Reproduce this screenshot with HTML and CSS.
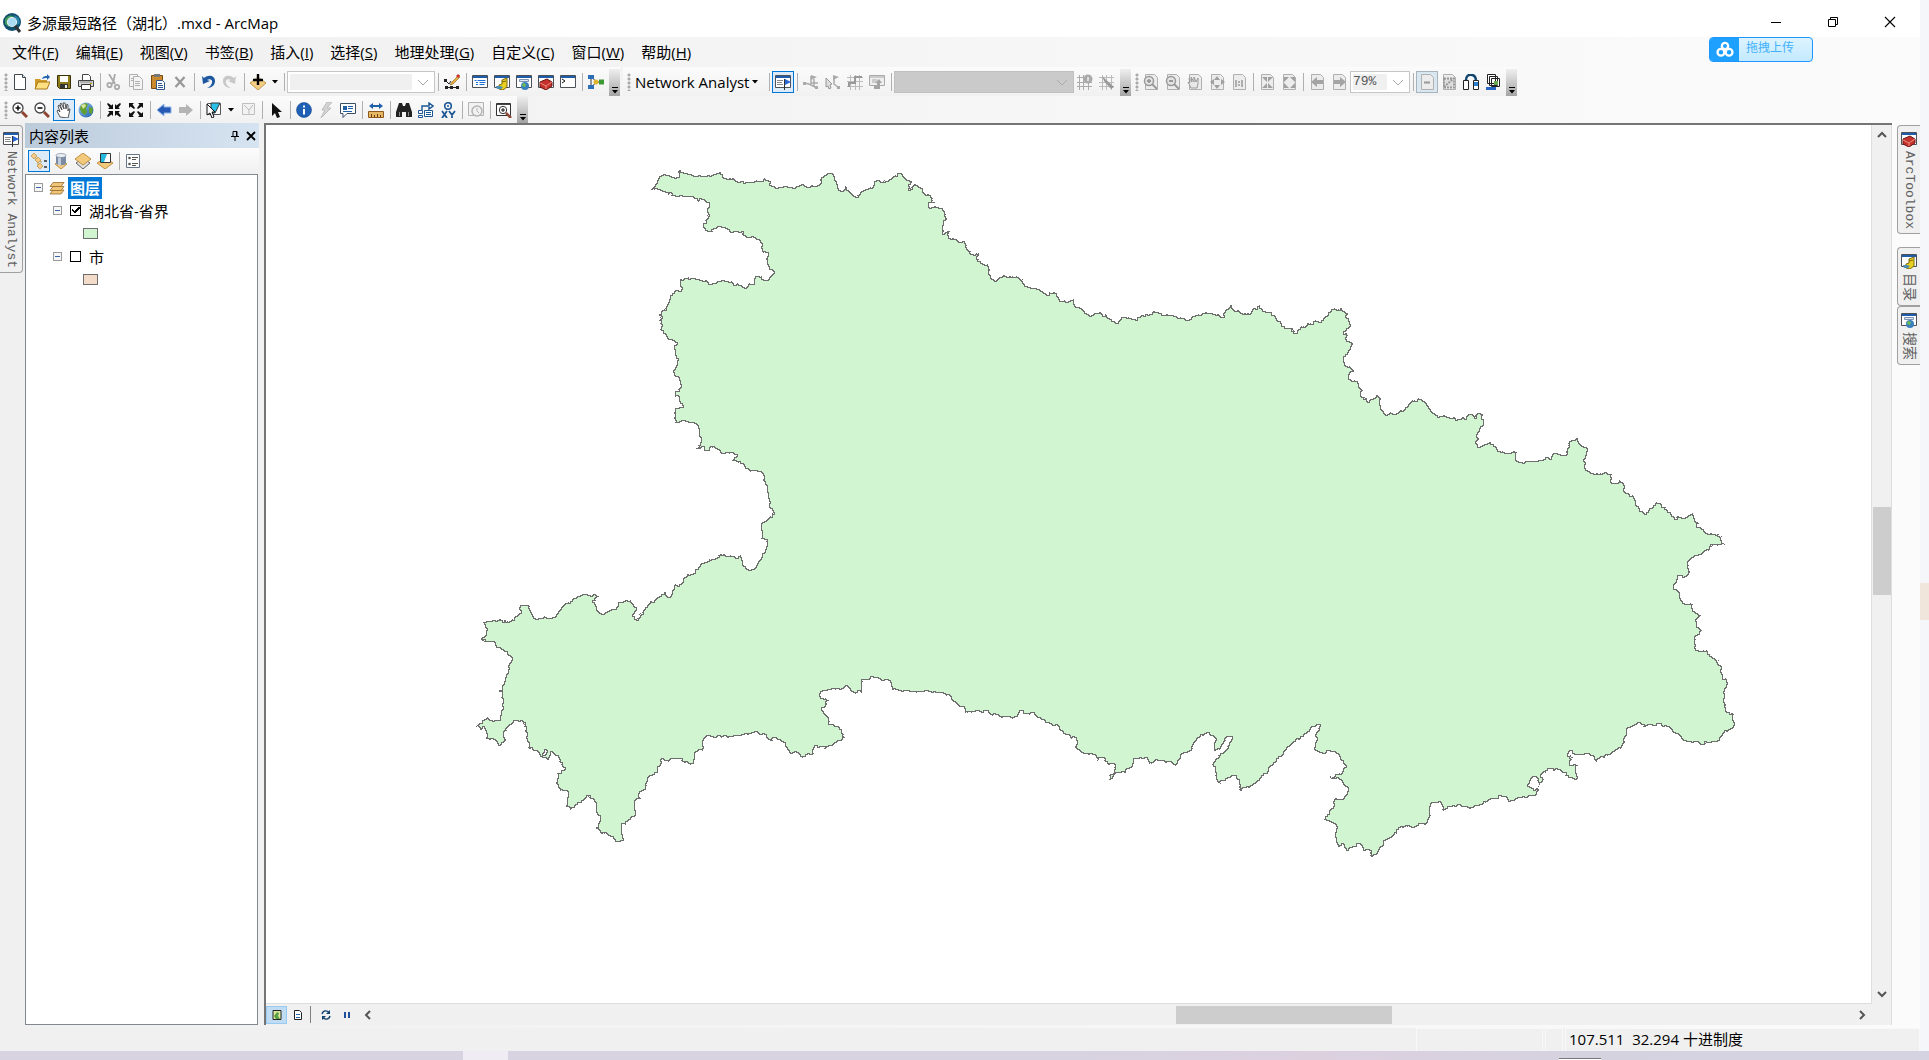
FILE: index.html
```html
<!DOCTYPE html>
<html lang="zh-CN">
<head>
<meta charset="utf-8">
<title>多源最短路径（湖北）.mxd - ArcMap</title>
<link rel="stylesheet" href="styles.css">
</head>
<body>
<svg class="sprite" aria-hidden="true">
<defs>
<linearGradient id="g-sky" x1="0" y1="0" x2="1" y2="1"><stop offset="0" stop-color="#9cc8f0"/><stop offset="1" stop-color="#1d5fae"/></linearGradient>
<filter id="coast" x="-2%" y="-2%" width="104%" height="104%" color-interpolation-filters="sRGB">
<feTurbulence type="fractalNoise" baseFrequency="0.16" numOctaves="2" seed="4" result="noise"/>
<feDisplacementMap in="SourceGraphic" in2="noise" scale="6" xChannelSelector="R" yChannelSelector="G" result="land"/>
<feMorphology in="land" operator="erode" radius="1" result="inner"/>
<feFlood flood-color="#6e6e6e"/>
<feComposite in2="land" operator="in" result="outline"/>
<feMerge><feMergeNode in="outline"/><feMergeNode in="inner"/></feMerge>
</filter>
</defs>
<symbol id="i-app" viewBox="0 0 20 20"><circle cx="10" cy="9" r="9" fill="#12506e"/><path d="M3 6c3-4 6-4 8-3l1 3-3 3-2 5-4-3z" fill="#3f9a5c"/><path d="M12 2l5 3 1 5-3 2z" fill="#2b84ab"/><circle cx="10" cy="9" r="4.500" fill="#a9dcf3" stroke="#e4edf1" stroke-width="1.200"/><path d="M13 13l5 6" stroke="#2b3438" stroke-width="3"/></symbol>
<symbol id="i-new" viewBox="0 0 16 16"><path d="M2.500.5h8l3 3v12h-11z" fill="#fff" stroke="#404850"/><path d="M10.500.5v3h3" fill="#dde6ee" stroke="#404850"/></symbol>
<symbol id="i-open" viewBox="0 0 16 16"><path d="M1 14V5h5l1 1h6v8z" fill="#d09a28"/><path d="M1 15l3-7h12l-3 7z" fill="#ffdf82" stroke="#a87818"/><path d="M8 5c1-3 3-3 5-3V0l3 3-3 3V4c-2 0-3 0-5 1z" fill="#2365ae"/></symbol>
<symbol id="i-save" viewBox="0 0 16 16"><path d="M1.500 1.500h13v13h-11l-2-2z" fill="#8d7b1c" stroke="#3a3308"/><path d="M4 2h8v6H4z" fill="#fff"/><path d="M4 10h8v4H4z" fill="#333"/><path d="M9 11h2v3H9z" fill="#eee"/></symbol>
<symbol id="i-print" viewBox="0 0 16 16"><path d="M4.500 6V.5h6l2 2V6" fill="#fff" stroke="#444"/><path d="M.5 6.500h15v6H.5z" fill="#d8d8d8" stroke="#444"/><path d="M3.500 10.500h9v5h-9z" fill="#fff" stroke="#333"/><path d="M2 8h12" stroke="#888"/><path d="M12 9h2v1h-2z" fill="#c9a300"/></symbol>
<symbol id="i-cut" viewBox="0 0 16 16"><g fill="none" stroke="#aaa" stroke-width="1.800"><path d="M3 0l6 10M9 0L7 9"/><circle cx="3.500" cy="11" r="2.200"/><circle cx="11" cy="13" r="2.200"/><path d="M5 10l4-2"/></g></symbol>
<symbol id="i-copy" viewBox="0 0 16 16"><g fill="#f4f4f4" stroke="#b0b0b0"><path d="M1.500.5h8v12h-8z"/><path d="M5.500 2.500h6l3 3v10h-9z"/><path d="M7 7.500h5M7 9.500h5M7 11.500h5M3 4.500h2M3 6.500h2"/></g></symbol>
<symbol id="i-paste" viewBox="0 0 16 16"><path d="M1.500 1.500h11v13h-11z" fill="#c98a2e" stroke="#7a4a10"/><path d="M4 0h6v3H4z" fill="#777"/><path d="M6.500 6.500h6l2 2v7h-8z" fill="#fff" stroke="#31588c"/><path d="M8 9.500h4M8 11.500h5M8 13.500h5" stroke="#31588c"/></symbol>
<symbol id="i-del" viewBox="0 0 16 16"><path d="M3.500 3l9 10m0-10l-9 10" stroke="#999" stroke-width="2.400"/></symbol>
<symbol id="i-undo" viewBox="0 0 16 16"><path d="M2 2l1 8 7-3-3-1c3-2 6 0 5 3-1 2-2 4-5 5 5 0 8-3 8-7 0-5-6-7-11-3z" fill="#1d57a0"/></symbol>
<symbol id="i-redo" viewBox="0 0 16 16"><path d="M14 2l-1 8-7-3 3-1C6 4 3 6 4 9c1 2 2 4 5 5-5 0-8-3-8-7 0-5 6-7 11-3z" fill="#c8c8c8"/></symbol>
<symbol id="i-add" viewBox="0 0 16 16"><path d="M0 9l8-6 8 6-8 7z" fill="#f2cd84" stroke="#c39a4a"/><path d="M8 0v11M3 6h10" stroke="#000" stroke-width="2.400"/></symbol>
<symbol id="i-edit" viewBox="0 0 16 16"><path d="M15 1L8 8l-2 3 3-1 7-7z" fill="#e7b33c" stroke="#8a5a10" stroke-width=".6"/><path d="M2 7l3 3 2-3M2 13.500h11" stroke="#222" fill="none"/><path d="M1 12h3v3H1zM6 12h3v3H6zM12 12h3v3h-3zM0 5h3v3H0z" fill="#222"/><path d="M14 0l2 2-2 2-2-2z" fill="#c33"/></symbol>
<symbol id="i-win" viewBox="0 0 16 16"><path d="M.5 1.500h15v12H.5z" fill="#fff" stroke="#4b5157"/><path d="M1 2h14v2H1z" fill="#1f5dab"/></symbol>
<symbol id="i-toc" viewBox="0 0 16 16"><use href="#i-win"/><path d="M2.500 6.500h2M5.500 6.500h8M4 8.500h2M7.500 8.500h6M4 10.500h2M7.500 10.500h5" stroke="#1a6fd0"/></symbol>
<symbol id="i-cat" viewBox="0 0 16 16"><use href="#i-win"/><path d="M8 6l5-2v9l-4 3-4-1v-4l3-1z" fill="#e8cf20" stroke="#7d6a08"/><path d="M2 12h4l3 1-2 2H3z" fill="#4c8fb5"/><path d="M8 8l4-1" stroke="#7d6a08"/></symbol>
<symbol id="i-search" viewBox="0 0 16 16"><use href="#i-win"/><path d="M3.500 5.500h9v2h-9z" fill="#dfe7f4" stroke="#7c93b4"/><circle cx="9" cy="12" r="4" fill="#3a80c0"/><path d="M7 9l3 1-1 3-3-1z" fill="#6cc04a"/></symbol>
<symbol id="i-box" viewBox="0 0 16 16"><use href="#i-win"/><path d="M2 8l7-3 5 3v4l-6 4-6-3z" fill="#c5322b" stroke="#6c1512"/><path d="M2 9l6 3 6-4M8 12v3" stroke="#f08a80" fill="none"/></symbol>
<symbol id="i-py" viewBox="0 0 16 16"><use href="#i-win"/><path d="M2 5l3 2-3 2" fill="none" stroke="#111"/></symbol>
<symbol id="i-model" viewBox="0 0 16 16"><path d="M3 3v10M4 3l4 5-4 5M8 8h6" stroke="#333" fill="none"/><path d="M0 1h6v4H0zM0 11h6v4H0z" fill="#2b6fb8"/><circle cx="8" cy="8" r="2.500" fill="#e0b52c"/><path d="M11 5.500h5v5h-5z" fill="#3d9a32"/></symbol>
<symbol id="i-flagwin" viewBox="0 0 16 16"><use href="#i-win"/><path d="M2 6.500h6M2 8.500h5M2 10.500h6" stroke="#888"/><path d="M9.500 5v11" stroke="#333"/><path d="M10 5l6 3-6 3z" fill="#2767d6"/></symbol>
<symbol id="i-na1" viewBox="0 0 16 16"><path d="M1 9l5 1 8 4M8 2v8M11 5v8M8 9h7" stroke="#aaa" stroke-width="1.500" fill="none"/><path d="M0 8h3v3H0zM12 12h3v3h-3zM8 1l6 2-6 3z" fill="#aaa"/></symbol>
<symbol id="i-na2" viewBox="0 0 16 16"><path d="M9 3v7l5 4" stroke="#aaa" stroke-width="1.500" fill="none"/><path d="M1 4l6 6-2 1 1 3-2 1-1-3-2 1z" fill="#ddd" stroke="#999"/><path d="M8 1l6 2-6 3zM12 12h3v3h-3z" fill="#aaa"/></symbol>
<symbol id="i-na3" viewBox="0 0 16 16"><path d="M0 3.500h16M0 7.500h16M0 12.500h16M3.500 1v15M8.500 1v15M12.500 1v15" stroke="#bbb" fill="none"/><path d="M2 13V9h6V3h7" fill="none" stroke="#999" stroke-width="2"/></symbol>
<symbol id="i-na4" viewBox="0 0 16 16"><path d="M.5 1.500h15v10H.5z" fill="#eee" stroke="#aaa"/><path d="M1 3h14M3 6h5M3 8h4" stroke="#aaa"/><path d="M5 15h6V9h2l-3-4-4 4h2v3H5z" fill="#a4a4a4"/></symbol>
<symbol id="i-na5" viewBox="0 0 16 16"><path d="M0 3.500h15M0 8.500h15M0 12.500h15M2.500 1v15M6.500 1v15M11.500 1v15" stroke="#aaa" fill="none"/><circle cx="11" cy="5" r="4.500" fill="#aaa"/><path d="M11 3v4" stroke="#eee" stroke-width="1.500"/></symbol>
<symbol id="i-na6" viewBox="0 0 16 16"><path d="M0 3.500h15M0 8.500h15M0 12.500h15M3.500 1v15M7.500 1v15M12.500 1v15" stroke="#bbb" fill="none"/><path d="M3 2l12 11-3 2-7-8z" fill="#999"/></symbol>
<symbol id="i-page" viewBox="0 0 16 16"><path d="M2.500.5h9l3 3v12h-12z" fill="#ececec" stroke="#b0b0b0"/></symbol>
<symbol id="i-pzin" viewBox="0 0 16 16"><use href="#i-page"/><circle cx="6" cy="7" r="4.500" fill="#e4e4e4" stroke="#999" stroke-width="1.500"/><path d="M9 10l5 5M4 7h4M6 5v4" stroke="#999" stroke-width="1.800"/></symbol>
<symbol id="i-pzout" viewBox="0 0 16 16"><use href="#i-page"/><circle cx="6" cy="7" r="4.500" fill="#e4e4e4" stroke="#999" stroke-width="1.500"/><path d="M9 10l5 5M4 7h4" stroke="#999" stroke-width="1.800"/></symbol>
<symbol id="i-hand" viewBox="0 0 16 16"><path d="M4 15L1 9l1-1 2 2-2-6 1-1 3 5-2-6 1-1 3 6-1-6h2l1 6 1-5 1 1v6l1-2h1l-1 5-1 4z" fill="#fff" stroke="#444" stroke-width=".9"/></symbol>
<symbol id="i-phand" viewBox="0 0 16 16"><use href="#i-page"/><path d="M4 14L1 8l2 1-1-5 3 4-1-5 3 5V3l2 5 2-4v6l-1 4z" fill="#e8e8e8" stroke="#999"/></symbol>
<symbol id="i-pfull" viewBox="0 0 16 16"><use href="#i-page"/><path d="M8 2l3 4H5zM8 15l3-4H5zM1 8l4-3v6zM16 8l-4-3v6z" fill="#a0a0a0"/></symbol>
<symbol id="i-p11" viewBox="0 0 16 16"><use href="#i-page"/><path d="M5 6v7M11 6v7M8 7v2M8 10v2" stroke="#999" stroke-width="1.500"/></symbol>
<symbol id="i-pin4" viewBox="0 0 16 16"><use href="#i-page"/><path d="M3 3h5v5zM14 3H9v5zM3 14h5V9zM14 14H9V9z" fill="#a0a0a0"/></symbol>
<symbol id="i-pout4" viewBox="0 0 16 16"><use href="#i-page"/><path d="M3 3v5l5-5zM14 3v5L9 3zM3 14V9l5 5zM14 14V9l-5 5z" fill="#a0a0a0"/></symbol>
<symbol id="i-pback" viewBox="0 0 16 16"><use href="#i-page"/><path d="M2 8l6-5v3h6v4H8v3z" fill="#a4a4a4"/></symbol>
<symbol id="i-pfwd" viewBox="0 0 16 16"><use href="#i-page"/><path d="M15 8L9 3v3H3v4h6v3z" fill="#a4a4a4"/></symbol>
<symbol id="i-draft" viewBox="0 0 16 16"><use href="#i-page"/><path d="M5 8.500h6" stroke="#999" stroke-width="2"/></symbol>
<symbol id="i-focus" viewBox="0 0 16 16"><use href="#i-page"/><path d="M3 4.500h10v9H3zM3 13l10-9" fill="#ddd" stroke="#999" stroke-width="2" stroke-dasharray="2 1"/></symbol>
<symbol id="i-change" viewBox="0 0 16 16"><path d="M.5 6.500h5v9h-5zM10.500 6.500h5v9h-5z" fill="#fff" stroke="#222"/><path d="M3 6c0-7 9-7 10 0" fill="none" stroke="#12466f" stroke-width="2.500"/><path d="M11 8h4v4h-4z" fill="#2b80d0"/></symbol>
<symbol id="i-ddp" viewBox="0 0 16 16"><path d="M2.500.5h8v9h-8zM4.500 2.500h8v9h-8zM6.500 4.500h8v8h-8z" fill="#fff" stroke="#222"/><path d="M9 7h4v4H9z" fill="#69a84e"/><path d="M1 13h10v3H1z" fill="#2767c6"/></symbol>
<symbol id="i-zin" viewBox="0 0 16 16"><circle cx="6" cy="6" r="5" fill="#fff" stroke="#444" stroke-width="1.300"/><path d="M3.500 6h5M6 3.500v5" stroke="#111" stroke-width="1.600"/><path d="M10 10l5 5" stroke="#8e4632" stroke-width="3"/></symbol>
<symbol id="i-zout" viewBox="0 0 16 16"><circle cx="6" cy="6" r="5" fill="#fff" stroke="#444" stroke-width="1.300"/><path d="M3.500 6h5" stroke="#111" stroke-width="1.600"/><path d="M10 10l5 5" stroke="#8e4632" stroke-width="3"/></symbol>
<symbol id="i-globe" viewBox="0 0 16 16"><circle cx="8" cy="8" r="7.500" fill="url(#g-sky)"/><path d="M3 3l5-2 2 2-2 3 1 4-2 3-3-2-2-4zM11 5l4 1-1 6-3-1z" fill="#629f2e"/><path d="M3 3l4-1 1 2-3 3z" fill="#d9e59c"/></symbol>
<symbol id="i-in4" viewBox="0 0 16 16"><path d="M7 7V2L5.500 3.500 2 1 1 2l2.500 3.500L2 7zM9 7V2l1.500 1.500L14 1l1 1-2.500 3.500L14 7zM7 9v5l-1.500-1.500L2 15l-1-1 2.500-3.500L2 9zM9 9v5l1.500-1.500L14 15l1-1-2.500-3.500L14 9z" fill="#111"/></symbol>
<symbol id="i-out4" viewBox="0 0 16 16"><path d="M1 1h5L4.500 2.500 7 6 6 7 2.500 4.500 1 6zM15 1h-5l1.500 1.500L9 6l1 1 3.500-2.500L15 6zM1 15h5l-1.500-1.500L7 10 6 9l-3.500 2.500L1 10zM15 15h-5l1.500-1.500L9 10l1-1 3.500 2.500L15 10z" fill="#111"/></symbol>
<symbol id="i-back" viewBox="0 0 16 16"><path d="M1 8l7-6v3h7v6H8v3z" fill="#2559b4" stroke="#8fb4e6"/></symbol>
<symbol id="i-fwd" viewBox="0 0 16 16"><path d="M15 8L8 2v3H1v6h7v3z" fill="#b4b4b4"/></symbol>
<symbol id="i-sel" viewBox="0 0 16 16"><path d="M1.500 1.500h13v11h-13z" fill="#fff" stroke="#555"/><path d="M5 1h9l-5 10H5z" fill="#28bfe8" stroke="#333"/><path d="M1 2l8 8H6l2 5-2 1-2-5-3 2z" fill="#fff" stroke="#111"/></symbol>
<symbol id="i-clear" viewBox="0 0 16 16"><path d="M2.500 1.500h12v11h-12z" fill="#f2f2f2" stroke="#c0c0c0"/><path d="M4 3l5 5 4-5M9 8v4" fill="none" stroke="#bbb"/></symbol>
<symbol id="i-arrow" viewBox="0 0 16 16"><path d="M4 1v13l3-3 2 5 3-1-2-5h4z" fill="#111"/></symbol>
<symbol id="i-info" viewBox="0 0 16 16"><circle cx="8" cy="8" r="7.500" fill="#1f5fb4" stroke="#184a8d" stroke-width=".6"/><path d="M8 7v5.500M8 3.500v2" stroke="#fff" stroke-width="2"/></symbol>
<symbol id="i-bolt" viewBox="0 0 16 16"><path d="M9 0L4 8h3l-4 8 10-10H9l5-6z" fill="#d4d4d4" stroke="#bbb"/></symbol>
<symbol id="i-popup" viewBox="0 0 16 16"><path d="M.5 1.500h15v10H7l-4 4v-4H.5z" fill="#fff" stroke="#3d4f66"/><path d="M3 4h4v4H3zM8 4h5v1H8zM8 6h5v1H8zM3 9h9v1H3z" fill="#1e5fa8"/></symbol>
<symbol id="i-measure" viewBox="0 0 16 16"><path d="M1 4l4-3v2h6V1l4 3-4 3V5H5v2z" fill="#1e5fa8"/><path d="M.5 9.500h15v6H.5z" fill="#e6b863" stroke="#8c5a20"/><path d="M3.500 12v3M6.500 13v2M9.500 12v3M12.500 13v2" stroke="#6b3c10"/></symbol>
<symbol id="i-find" viewBox="0 0 16 16"><path d="M3 1h3l1 3h2l1-3h3l3 9v5h-6v-5H6v5H0v-5z" fill="#222"/><path d="M3 10h1v4H3zM12 10h1v4h-1z" fill="#888"/></symbol>
<symbol id="i-route" viewBox="0 0 16 16"><path d="M4 8V4h7V1l4 3-4 3V5" fill="none" stroke="#1d5795" stroke-width="1.400"/><path d="M.5 8.500h4v3h-4zM6.500 8.500h8v6h-8zM.5 13.500h4v2h-4z" fill="#fff" stroke="#1d5795"/><path d="M8 10.500h5M8 12.500h5" stroke="#1d5795"/></symbol>
<symbol id="i-xy" viewBox="0 0 16 16"><circle cx="8" cy="4" r="3.300" fill="none" stroke="#1d5795" stroke-width="1.600"/><circle cx="8" cy="4" r="1" fill="#1d5795"/><path d="M2 9l5 7M7 9l-5 7M9 9l3 4 3-4M12 12v4" fill="none" stroke="#1d5795" stroke-width="1.800"/></symbol>
<symbol id="i-time" viewBox="0 0 16 16"><path d="M.5.500h15v13H.5z" fill="#f2f2f2" stroke="#b4b4b4"/><circle cx="9" cy="9" r="5" fill="#f2f2f2" stroke="#b4b4b4" stroke-width="1.500"/><path d="M9 6v3l2 2" fill="none" stroke="#b4b4b4"/></symbol>
<symbol id="i-viewer" viewBox="0 0 16 16"><path d="M.5 1.500h14v12H.5z" fill="#fff" stroke="#333"/><path d="M1 2.500h13" stroke="#444"/><circle cx="7" cy="8" r="3.700" fill="#fff" stroke="#333"/><path d="M5 8h4M7 6v4" stroke="#111"/><path d="M10 11l5 5" stroke="#8e4632" stroke-width="2.500"/></symbol>
<symbol id="i-list1" viewBox="0 0 16 16"><path d="M4 4l3 4 4 1M7 8v6h4" fill="none" stroke="#bf9440"/><path d="M3 0l3 3-3 3-3-3zM7 4l3 3-3 3-3-3zM9 10l3 3-3 3-3-3z" fill="#f3cb84" stroke="#bd9144" stroke-width=".7"/><path d="M13 8h3M13 14h3" stroke="#333" stroke-width="1.500"/></symbol>
<symbol id="i-list2" viewBox="0 0 16 16"><path d="M2 11l6-3 6 3-6 5z" fill="#f3cb84" stroke="#bd9144"/><path d="M3 2v8c0 3 10 3 10 0V2z" fill="#7a8ba3"/><path d="M5 3h3v9H5z" fill="#c0ccdc"/><ellipse cx="8" cy="2.500" rx="5" ry="2" fill="#edf1f6" stroke="#65768e" stroke-width=".6"/></symbol>
<symbol id="i-list3" viewBox="0 0 16 16"><path d="M1 10l7-5 7 5-7 6z" fill="#ddd" stroke="#666"/><path d="M0 6l8-6 8 6-8 6z" fill="#f3c97c" stroke="#bd9144"/></symbol>
<symbol id="i-list4" viewBox="0 0 16 16"><path d="M0 10l8-5 8 5-8 6z" fill="#f3c97c" stroke="#bd9144"/><path d="M3.500.5h10v9h-10z" fill="#fff" stroke="#333"/><path d="M4 1h6l-3 8H4z" fill="#26b8df"/></symbol>
<symbol id="i-list5" viewBox="0 0 16 16"><path d="M1.500 1.500h13v13h-13z" fill="#fff" stroke="#65758a"/><circle cx="4.500" cy="5" r="1.300" fill="#555"/><circle cx="4.500" cy="11" r="1.300" fill="#555"/><path d="M7 4.500h6M7 6.500h4M7 10.500h6M7 12.500h4" stroke="#555"/></symbol>
<symbol id="i-layers" viewBox="0 0 16 14"><g fill="#f0c57a" stroke="#96692a" stroke-width=".8"><path d="M4 9h11l-3 4H1z"/><path d="M4 5.500h11l-3 4H1z"/><path d="M4 1.500h11l-3 4H1z"/></g></symbol>
<symbol id="i-map" viewBox="0 0 10 10"><path d="M1 .5h8v9H1z" fill="#dbe9a0" stroke="#222"/><path d="M2 6l3-4 2 1-1 3 2 3H4z" fill="#5aa040"/></symbol>
<symbol id="i-layout" viewBox="0 0 10 10"><path d="M1.500.5h5l2 2v7h-7z" fill="#fff" stroke="#222"/><path d="M3 4h4v1H3zM3 7h4v1H3z" fill="#2767a8"/></symbol>
<symbol id="i-refresh" viewBox="0 0 10 10"><path d="M1 4c1-4 6-4 7-1M9 6c-1 4-6 4-7 1" fill="none" stroke="#12426f" stroke-width="1.400"/><path d="M9 0v4H5zM1 10V6h4z" fill="#12426f"/></symbol>
<symbol id="i-pause" viewBox="0 0 10 10"><path d="M2 2h2v6H2zM6 2h2v6H6z" fill="#1d4f9a"/></symbol>
<symbol id="i-left" viewBox="0 0 10 10"><path d="M7 1L3 5l4 4" fill="none" stroke="#555" stroke-width="2"/></symbol>
<symbol id="i-right" viewBox="0 0 10 10"><path d="M3 1l4 4-4 4" fill="none" stroke="#555" stroke-width="2"/></symbol>
<symbol id="i-up" viewBox="0 0 10 10"><path d="M1 7l4-4 4 4" fill="none" stroke="#555" stroke-width="2"/></symbol>
<symbol id="i-down" viewBox="0 0 10 10"><path d="M1 3l4 4 4-4" fill="none" stroke="#555" stroke-width="2"/></symbol>
<symbol id="i-chev" viewBox="0 0 10 10"><path d="M0 3l5 5 5-5" fill="none" stroke="#a9a9a9"/></symbol>
<symbol id="i-drop" viewBox="0 0 6 4"><path d="M0 0h6L3 3.500z" fill="#000"/></symbol>
<symbol id="i-over" viewBox="0 0 8 8"><path d="M1 1.500h6" stroke="#000"/><path d="M1 4h6L4 7.500z" fill="#000"/></symbol>
<symbol id="i-min" viewBox="0 0 12 12"><path d="M1 6.500h10" stroke="#000"/></symbol>
<symbol id="i-restore" viewBox="0 0 12 12"><path d="M1.500 3.500h7v7h-7zM3.500 3V1.500h7v7H9" fill="none" stroke="#000"/></symbol>
<symbol id="i-close" viewBox="0 0 12 12"><path d="M1 1l10 10M11 1L1 11" stroke="#000" stroke-width="1.100"/></symbol>
<symbol id="i-x" viewBox="0 0 10 10"><path d="M1 1l8 8M9 1L1 9" stroke="#000" stroke-width="1.800"/></symbol>
<symbol id="i-pin" viewBox="0 0 10 10"><path d="M3 .5h4v5H3zM1 5.500h8M5 6v4M6.500 1v5" fill="none" stroke="#000"/></symbol>
<symbol id="i-cloud" viewBox="0 0 20 20"><g fill="none" stroke="#fff" stroke-width="2.600"><circle cx="10" cy="5.500" r="3.500"/><circle cx="5.500" cy="12.500" r="3.800"/><circle cx="14.500" cy="12.500" r="3.800"/></g></symbol>
</svg>

<div class="screen">
<div class="window">
<header class="titlebar">
<svg class="app-icon"><use href="#i-app"/></svg>
<h1 class="title">多源最短路径（湖北）.mxd - ArcMap</h1>
<div class="window-buttons">
<button aria-label="最小化"><svg><use href="#i-min"/></svg></button>
<button aria-label="还原"><svg><use href="#i-restore"/></svg></button>
<button aria-label="关闭"><svg><use href="#i-close"/></svg></button>
</div>
</header>

<nav class="menubar">
<button>文件(<u>F</u>)</button><button>编辑(<u>E</u>)</button><button>视图(<u>V</u>)</button><button>书签(<u>B</u>)</button><button>插入(<u>I</u>)</button><button>选择(<u>S</u>)</button><button>地理处理(<u>G</u>)</button><button>自定义(<u>C</u>)</button><button>窗口(<u>W</u>)</button><button>帮助(<u>H</u>)</button>
<button class="upload"><span class="upload-logo"><svg><use href="#i-cloud"/></svg></span><span class="upload-text">拖拽上传</span></button>
</nav>

<div class="toolrow toolrow-first">
<div class="toolbar" role="toolbar" aria-label="标准工具">
<i class="grip"></i>
<button class="tool" aria-label="新建"><svg><use href="#i-new"/></svg></button>
<button class="tool" aria-label="打开"><svg><use href="#i-open"/></svg></button>
<button class="tool" aria-label="保存"><svg><use href="#i-save"/></svg></button>
<button class="tool" aria-label="打印"><svg><use href="#i-print"/></svg></button>
<i class="sep"></i>
<button class="tool" aria-label="剪切"><svg><use href="#i-cut"/></svg></button>
<button class="tool" aria-label="复制"><svg><use href="#i-copy"/></svg></button>
<button class="tool" aria-label="粘贴"><svg><use href="#i-paste"/></svg></button>
<button class="tool" aria-label="删除"><svg><use href="#i-del"/></svg></button>
<i class="sep"></i>
<button class="tool" aria-label="撤消"><svg><use href="#i-undo"/></svg></button>
<button class="tool" aria-label="恢复"><svg><use href="#i-redo"/></svg></button>
<i class="sep"></i>
<button class="tool" aria-label="添加数据"><svg><use href="#i-add"/></svg></button>
<button class="drop" aria-label="添加数据选项"><svg><use href="#i-drop"/></svg></button>
<i class="sep"></i>
<label class="combo combo-scale"><select aria-label="比例尺" disabled><option></option></select><svg><use href="#i-chev"/></svg></label>
<i class="sep"></i>
<button class="tool" aria-label="编辑器工具条"><svg><use href="#i-edit"/></svg></button>
<i class="sep"></i>
<button class="tool" aria-label="内容列表窗口"><svg><use href="#i-toc"/></svg></button>
<button class="tool" aria-label="目录窗口"><svg><use href="#i-cat"/></svg></button>
<button class="tool" aria-label="搜索窗口"><svg><use href="#i-search"/></svg></button>
<button class="tool" aria-label="ArcToolbox 窗口"><svg><use href="#i-box"/></svg></button>
<button class="tool" aria-label="Python 窗口"><svg><use href="#i-py"/></svg></button>
<i class="sep"></i>
<button class="tool" aria-label="模型构建器"><svg><use href="#i-model"/></svg></button>
<button class="overflow" aria-label="工具条选项"><svg><use href="#i-over"/></svg></button>
</div>
<div class="toolbar" role="toolbar" aria-label="Network Analyst">
<i class="grip"></i>
<button class="na-menu">Network Analyst<svg><use href="#i-drop"/></svg></button>
<i class="sep"></i>
<button class="tool is-on" aria-label="Network Analyst 窗口"><svg><use href="#i-flagwin"/></svg></button>
<i class="sep"></i>
<button class="tool" aria-label="创建网络位置"><svg><use href="#i-na1"/></svg></button>
<button class="tool" aria-label="选择网络位置"><svg><use href="#i-na2"/></svg></button>
<button class="tool" aria-label="求解"><svg><use href="#i-na3"/></svg></button>
<button class="tool" aria-label="方向"><svg><use href="#i-na4"/></svg></button>
<i class="sep"></i>
<label class="combo combo-network"><select aria-label="网络数据集" disabled><option></option></select><svg><use href="#i-chev"/></svg></label>
<button class="tool" aria-label="网络识别"><svg><use href="#i-na5"/></svg></button>
<button class="tool" aria-label="构建网络"><svg><use href="#i-na6"/></svg></button>
<button class="overflow" aria-label="工具条选项"><svg><use href="#i-over"/></svg></button>
</div>
<div class="toolbar" role="toolbar" aria-label="布局">
<i class="grip"></i>
<button class="tool" aria-label="布局放大"><svg><use href="#i-pzin"/></svg></button>
<button class="tool" aria-label="布局缩小"><svg><use href="#i-pzout"/></svg></button>
<button class="tool" aria-label="布局平移"><svg><use href="#i-phand"/></svg></button>
<button class="tool" aria-label="缩放至整页"><svg><use href="#i-pfull"/></svg></button>
<button class="tool" aria-label="缩放至 100%"><svg><use href="#i-p11"/></svg></button>
<i class="sep"></i>
<button class="tool" aria-label="固定比例放大"><svg><use href="#i-pin4"/></svg></button>
<button class="tool" aria-label="固定比例缩小"><svg><use href="#i-pout4"/></svg></button>
<i class="sep"></i>
<button class="tool" aria-label="返回到范围"><svg><use href="#i-pback"/></svg></button>
<button class="tool" aria-label="前进至范围"><svg><use href="#i-pfwd"/></svg></button>
<label class="combo combo-zoom"><select aria-label="缩放" disabled><option>79%</option></select><svg><use href="#i-chev"/></svg></label>
<i class="sep"></i>
<button class="tool is-checked" aria-label="切换描绘模式"><svg><use href="#i-draft"/></svg></button>
<button class="tool" aria-label="聚焦数据框"><svg><use href="#i-focus"/></svg></button>
<button class="tool" aria-label="更改布局"><svg><use href="#i-change"/></svg></button>
<button class="tool" aria-label="数据驱动页面"><svg><use href="#i-ddp"/></svg></button>
<button class="overflow" aria-label="工具条选项"><svg><use href="#i-over"/></svg></button>
</div>
</div>

<div class="toolrow toolrow-second">
<div class="toolbar" role="toolbar" aria-label="工具">
<i class="grip"></i>
<button class="tool" aria-label="放大"><svg><use href="#i-zin"/></svg></button>
<button class="tool" aria-label="缩小"><svg><use href="#i-zout"/></svg></button>
<button class="tool is-on" aria-label="平移"><svg><use href="#i-hand"/></svg></button>
<button class="tool" aria-label="全图"><svg><use href="#i-globe"/></svg></button>
<i class="sep"></i>
<button class="tool" aria-label="固定比例放大"><svg><use href="#i-in4"/></svg></button>
<button class="tool" aria-label="固定比例缩小"><svg><use href="#i-out4"/></svg></button>
<i class="sep"></i>
<button class="tool" aria-label="上一视图"><svg><use href="#i-back"/></svg></button>
<button class="tool" aria-label="下一视图"><svg><use href="#i-fwd"/></svg></button>
<i class="sep"></i>
<button class="tool" aria-label="选择要素"><svg><use href="#i-sel"/></svg></button>
<button class="drop" aria-label="选择方式"><svg><use href="#i-drop"/></svg></button>
<button class="tool" aria-label="清除所选要素"><svg><use href="#i-clear"/></svg></button>
<i class="sep"></i>
<button class="tool" aria-label="选择元素"><svg><use href="#i-arrow"/></svg></button>
<i class="sep"></i>
<button class="tool" aria-label="识别"><svg><use href="#i-info"/></svg></button>
<button class="tool" aria-label="超链接"><svg><use href="#i-bolt"/></svg></button>
<button class="tool" aria-label="HTML 弹出窗口"><svg><use href="#i-popup"/></svg></button>
<i class="sep"></i>
<button class="tool" aria-label="测量"><svg><use href="#i-measure"/></svg></button>
<i class="sep"></i>
<button class="tool" aria-label="查找"><svg><use href="#i-find"/></svg></button>
<button class="tool" aria-label="查找路径"><svg><use href="#i-route"/></svg></button>
<button class="tool" aria-label="转到 XY"><svg><use href="#i-xy"/></svg></button>
<i class="sep"></i>
<button class="tool" aria-label="时间滑块"><svg><use href="#i-time"/></svg></button>
<i class="sep"></i>
<button class="tool" aria-label="创建查看器窗口"><svg><use href="#i-viewer"/></svg></button>
<button class="overflow" aria-label="工具条选项"><svg><use href="#i-over"/></svg></button>
</div>
</div>

<main class="workspace">
<div class="dock dock-left">
<button class="side-tab tab-left"><svg><use href="#i-flagwin"/></svg><span>Network Analyst</span></button>
</div>

<aside class="toc">
<div class="toc-head"><h2>内容列表</h2><button aria-label="自动隐藏"><svg><use href="#i-pin"/></svg></button><button aria-label="关闭面板"><svg><use href="#i-x"/></svg></button></div>
<div class="toc-tools">
<button class="tool is-on" aria-label="按绘制顺序列出"><svg><use href="#i-list1"/></svg></button>
<button class="tool" aria-label="按源列出"><svg><use href="#i-list2"/></svg></button>
<button class="tool" aria-label="按可见性列出"><svg><use href="#i-list3"/></svg></button>
<button class="tool" aria-label="按选择列出"><svg><use href="#i-list4"/></svg></button>
<i class="sep"></i>
<button class="tool" aria-label="选项"><svg><use href="#i-list5"/></svg></button>
</div>
<ul class="tree">
<li class="row"><button class="twisty" aria-label="折叠图层"></button><svg class="layers"><use href="#i-layers"/></svg><span class="selected">图层</span></li>
<li class="row level-2"><button class="twisty" aria-label="折叠湖北省"></button><input type="checkbox" id="lyr-prov" checked><label for="lyr-prov">湖北省-省界</label></li>
<li class="row level-3"><span class="swatch swatch-green"></span></li>
<li class="row level-2"><button class="twisty" aria-label="折叠市"></button><input type="checkbox" id="lyr-city"><label for="lyr-city">市</label></li>
<li class="row level-3"><span class="swatch swatch-peach"></span></li>
</ul>
</aside>

<section class="map-frame">
<div class="map-view">
<svg class="map" viewBox="267 125 1605 878" role="img" aria-label="湖北省省界">
<path class="province" filter="url(#coast)" d="M652 190L658 182L664 174L672 176L679 176L681 170L685 173L693 173L694 176L709 176L720 173L729 178L738 181L750 182L760 181L768 180L771 183L778 188L786 186L796 188L802 184L811 186L818 185L824 177L828 172L832 173L837 178L839 189L844 190L846 187L852 192L857 198L859 193L865 190L874 188L875 182L880 180L891 181L895 176L899 172L905 177L913 182L910 189L915 185L924 187L926 193L932 196L935 202L928 207L943 207L948 218L944 223L944 233L951 231L950 237L956 240L963 242L968 247L971 254L975 254L978 251L980 254L979 258L982 263L989 267L991 276L996 280L1005 274L1008 278L1011 276L1020 278L1030 287L1044 290L1048 294L1057 292L1061 300L1068 302L1075 299L1078 307L1085 312L1090 314L1102 313L1110 318L1117 323L1125 316L1138 320L1141 315L1151 314L1154 310L1167 315L1177 317L1188 320L1196 316L1207 312L1225 316L1226 310L1232 306L1238 311L1252 315L1253 309L1261 306L1264 310L1273 314L1281 321L1284 327L1297 332L1303 327L1315 322L1327 317L1333 308L1344 309L1348 314L1352 325L1347 333L1349 341L1354 342L1351 352L1344 357L1346 362L1355 370L1350 377L1359 382L1362 390L1363 397L1371 401L1377 395L1382 399L1382 408L1387 416L1393 413L1403 412L1408 406L1412 401L1420 399L1427 403L1432 411L1438 416L1453 417L1460 419L1468 417L1472 414L1476 417L1479 414L1484 414L1484 425L1478 435L1480 447L1491 442L1498 449L1506 453L1516 453L1517 459L1524 463L1529 460L1542 460L1547 457L1551 461L1555 453L1567 455L1569 446L1572 440L1579 440L1582 445L1589 448L1585 467L1592 474L1598 473L1602 475L1606 473L1614 473L1612 482L1622 481L1626 487L1627 494L1635 495L1639 507L1646 514L1655 507L1656 502L1665 506L1673 515L1677 520L1679 517L1687 517L1694 513L1697 522L1704 530L1715 535L1722 536L1725 544L1715 546L1702 555L1694 557L1689 563L1692 573L1687 577L1679 576L1675 588L1682 595L1684 603L1692 604L1696 612L1700 616L1696 627L1704 631L1695 638L1698 650L1710 651L1712 657L1722 664L1724 677L1727 680L1726 707L1734 716L1735 727L1725 734L1716 742L1703 744L1689 742L1676 733L1663 725L1654 726L1634 725L1628 731L1627 742L1618 750L1607 756L1597 761L1593 755L1576 755L1571 751L1568 754L1573 757L1570 764L1579 764L1576 768L1577 779L1566 777L1567 772L1551 769L1543 773L1544 780L1539 785L1540 792L1534 797L1524 797L1511 802L1509 798L1491 799L1482 805L1472 809L1462 806L1446 809L1440 802L1432 805L1430 823L1417 826L1402 827L1395 836L1387 841L1382 847L1380 853L1373 857L1369 851L1363 849L1360 845L1352 847L1348 852L1344 845L1339 848L1335 835L1339 827L1335 824L1326 819L1333 807L1336 798L1345 798L1349 789L1341 780L1330 777L1340 773L1347 766L1341 758L1334 751L1326 753L1315 751L1317 735L1321 725L1317 725L1303 737L1290 747L1279 760L1268 772L1253 788L1244 787L1243 791L1240 791L1239 780L1234 776L1225 780L1221 785L1218 782L1213 762L1226 751L1233 737L1229 737L1223 747L1216 752L1216 737L1210 733L1203 736L1195 742L1193 752L1183 756L1177 765L1165 761L1157 761L1151 764L1145 758L1136 759L1134 766L1126 773L1117 773L1111 781L1111 775L1114 772L1114 765L1105 761L1104 755L1098 760L1095 755L1078 751L1076 738L1064 734L1058 727L1044 721L1034 714L1021 712L1015 718L995 716L989 711L968 713L965 707L960 708L952 699L944 693L925 692L907 691L892 689L891 681L878 679L863 680L863 692L857 694L848 687L842 690L829 689L822 691L822 697L831 701L824 709L829 717L831 725L841 726L846 737L837 743L826 749L817 746L814 754L802 758L798 753L791 754L787 746L774 738L769 739L762 734L752 734L744 736L725 737L709 737L703 742L704 749L695 754L695 763L687 764L682 759L674 759L670 762L664 760L659 770L654 777L650 776L646 790L640 792L642 800L635 801L637 814L631 820L623 825L624 841L617 842L613 837L606 832L603 834L598 828L602 818L597 814L597 802L589 796L584 802L576 807L567 808L569 792L560 789L558 783L560 775L566 768L560 763L561 759L553 753L550 759L542 757L535 751L529 748L527 728L524 722L516 721L505 733L506 740L500 746L495 742L489 739L485 728L480 729L478 725L488 718L493 721L501 719L504 700L502 690L509 673L512 658L503 650L493 642L487 642L483 637L487 633L485 622L493 620L503 619L510 623L517 617L522 612L522 605L530 605L533 613L537 619L546 617L553 619L562 608L574 598L586 594L600 596L593 602L603 615L608 611L617 607L628 598L638 609L635 615L637 620L651 603L666 592L668 596L673 595L675 587L684 583L686 576L695 573L697 569L707 561L725 554L734 557L742 556L745 565L751 570L756 568L765 552L769 540L763 539L762 523L772 517L774 512L771 508L769 493L765 475L760 471L750 472L742 462L732 461L738 455L723 453L715 447L709 450L698 449L703 439L700 435L699 425L693 423L684 421L679 423L675 419L676 408L683 407L678 395L675 393L682 387L680 379L675 377L675 370L680 359L675 354L675 345L678 342L670 340L664 332L660 329L663 322L660 313L665 311L669 302L673 293L683 290L681 279L697 278L711 283L725 280L738 284L746 287L755 282L756 276L762 276L767 280L775 273L767 265L769 253L763 250L764 245L758 240L749 238L742 233L729 231L720 228L709 233L704 228L708 215L709 203L699 200L693 196L678 196L664 192ZM1535 776L1541 784L1536 791L1529 785ZM545 750L548 753L544 756Z"/>
</svg>
</div>
<div class="vscroll"><button aria-label="向上滚动"><svg><use href="#i-up"/></svg></button><div class="track"><i class="fill-a"></i><i class="thumb"></i><i class="fill-b"></i></div><button aria-label="向下滚动"><svg><use href="#i-down"/></svg></button></div>
<div class="hscroll">
<button class="view-btn is-active" aria-label="数据视图"><svg><use href="#i-map"/></svg></button>
<button class="view-btn" aria-label="布局视图"><svg><use href="#i-layout"/></svg></button>
<i class="view-sep"></i>
<button class="view-btn" aria-label="刷新"><svg><use href="#i-refresh"/></svg></button>
<button class="view-btn" aria-label="暂停绘制"><svg><use href="#i-pause"/></svg></button>
<button class="view-btn" aria-label="向左滚动"><svg><use href="#i-left"/></svg></button>
<div class="track"><i class="fill-a"></i><i class="thumb"></i><i class="fill-b"></i></div>
<button class="view-btn" aria-label="向右滚动"><svg><use href="#i-right"/></svg></button>
</div>
</section>

<div class="dock dock-right">
<button class="side-tab"><svg><use href="#i-box"/></svg><span>ArcToolbox</span></button>
<div class="tab-group">
<button class="side-tab"><svg><use href="#i-cat"/></svg><span>目录</span></button>
<button class="side-tab"><svg><use href="#i-search"/></svg><span>搜索</span></button>
</div>
</div>
</main>

<footer class="statusbar"><span class="cell cell-a"></span><span class="cell cell-b"></span><output class="cell cell-coords">107.511&nbsp; 32.294 十进制度</output></footer>
</div>
<div class="edge-right"><i></i></div>
<div class="edge-bottom"><i class="task"></i><i class="peek"></i></div>
</div>
</body>
</html>
```
FILE: styles.css
```css
* { box-sizing: border-box; }
body { margin: 0; font-family: "Open Sans", "Noto Sans CJK SC", sans-serif; font-size: 15px; line-height: 20px; color: #000; background: #f0f0f0; }
button { margin: 0; padding: 0; border: 0; background: none; font: inherit; color: inherit; }
svg { display: block; flex: none; }
h1, h2, ul { margin: 0; padding: 0; font-size: inherit; font-weight: 400; list-style: none; }
.sprite { position: absolute; width: 0; height: 0; }

.screen { display: grid; grid-template-columns: minmax(0, 1fr) 9px; grid-template-rows: minmax(0, 1fr) 9px; height: 100vh; }
.window { display: flex; flex-direction: column; min-height: 0; background: linear-gradient(90deg, #f0f0f0, #fbfbfb); }
.edge-right { background: #f4f6f9; display: grid; grid-template-rows: 583fr 37px 431fr; }
.edge-right i { grid-row: 2; background: #f1e6dc; }
.edge-bottom { grid-column: 1 / -1; display: flex; justify-content: space-between; background: linear-gradient(90deg, #d7d3e1 0, #d7d3e1 55%, #dcd0df 68%, #d5d2e0 82%, #d5d3e2); }
.task { width: 45px; margin-left: 24%; background: #efedf3; }
.peek { width: 42px; height: 2px; margin: 7px 17% 0 0; background: #fff; border-top: 1px solid #777; }

.titlebar { display: flex; align-items: center; height: 37px; flex: none; padding: 8px 2px 0; background: #fff; }
.app-icon { width: 20px; height: 20px; margin-right: 5px; }
.title { flex: 1; }
.window-buttons { display: flex; padding-bottom: 2px; }
.window-buttons button { width: 57px; height: 24px; display: grid; place-items: center; }
.window-buttons svg { width: 12px; height: 12px; }

.menubar { display: flex; align-items: center; height: 30px; flex: none; padding-left: 12px; gap: 17px; }
.upload { display: flex; align-self: flex-start; width: 104px; height: 25px; margin: 0 107px 0 auto; border: 1px solid #1e96ff; border-radius: 4px; overflow: hidden; background: linear-gradient(#def4ff, #c3e9ff); }
.upload-logo { width: 29px; display: grid; place-items: center; background: #1ea0ff; }
.upload-logo svg { width: 20px; height: 18px; }
.upload-text { padding-left: 7px; font-size: 12px; color: #42b0fb; }

.toolrow { display: flex; flex: none; }
.toolrow-first { height: 29px; }
.toolrow-second { height: 27px; }
.toolbar { display: flex; align-items: center; background: linear-gradient(#fbfbfb, #f1f1f1); }
.toolbar:nth-child(2) { margin-left: 3px; }
.grip { width: 9px; height: 18px; flex: none; background: radial-gradient(circle at 6px 2px, #aaa 1px, transparent 2px) 0 0 / 9px 4px; }
.tool { width: 22px; height: 22px; flex: none; display: grid; place-items: center; border: 1px solid transparent; }
.tool svg { width: 16px; height: 16px; }
.tool.is-on { border-color: #0078d7; background: #dcebf7; }
.tool.is-checked { border-color: #a8b4bd; background: #d9e7f1; }
.sep { width: 1px; height: 18px; flex: none; margin: 0 2px 0 3px; background: #b0b0b0; }
.drop { width: 12px; height: 22px; flex: none; display: grid; place-items: center; }
.drop svg, .na-menu svg { width: 6px; height: 4px; }
.na-menu { display: flex; align-items: center; gap: 3px; width: 134px; padding-left: 3px; white-space: nowrap; }
.overflow { align-self: flex-end; width: 11px; height: 27px; margin-left: 2px; display: flex; align-items: flex-end; justify-content: center; padding-bottom: 2px; background: linear-gradient(#efefef, #a4a4a4); }
.overflow svg { width: 8px; height: 8px; }
.combo { display: flex; align-items: center; height: 22px; border: 1px solid #c6c6c6; background: #fff; padding-right: 6px; gap: 6px; }
.combo select { appearance: none; flex: 1; min-width: 0; height: 16px; margin: 0 0 0 2px; padding: 0; border: 0; border-radius: 0; background: #f0f0f0; color: #555; opacity: 1; font: 13px/16px "Liberation Mono", monospace; }
.combo svg { width: 10px; height: 10px; }
.combo-scale { width: 148px; }
.combo-network { width: 180px; background: #cacaca; border-color: #c0c0c0; }
.combo-network select { background: transparent; }
.combo-zoom { width: 60px; }

.workspace { display: flex; flex: 1; min-height: 0; }
.dock { display: flex; flex-direction: column; flex: none; }
.dock-left { width: 25px; padding: 2px 2px 0 0; background: #f0f0f0; }
.dock-right { width: 28px; padding: 2px 0 0 5px; gap: 13px; background: #fbfbfb; }
.side-tab { display: flex; flex-direction: column; align-items: center; gap: 4px; width: 23px; padding: 5px 0 4px; border: 1px solid #a0a0a0; border-right: 0; border-radius: 4px 0 0 4px; background: #f0f0f0; color: #606060; font: 13px/16px "Liberation Mono", "Noto Sans CJK SC", monospace; }
.side-tab svg { width: 16px; height: 16px; }
.side-tab span { writing-mode: vertical-rl; text-orientation: sideways; white-space: nowrap; }
.tab-left { border: 1px solid #a0a0a0; border-left: 0; border-radius: 0 4px 4px 0; }
.tab-group { display: flex; flex-direction: column; }
.tab-group .side-tab { font-size: 14px; }

.toc { display: flex; flex-direction: column; width: 234px; flex: none; padding-bottom: 3px; }
.toc-head { display: flex; align-items: center; gap: 6px; height: 25px; flex: none; padding: 0 3px 0 4px; background: linear-gradient(90deg, #bccbda, #d6e4f2); }
.toc-head h2 { flex: 1; }
.toc-head svg { width: 10px; height: 10px; }
.toc-tools { display: flex; align-items: center; height: 26px; flex: none; padding-left: 3px; background: linear-gradient(#fcfcfc, #f0f0f0); }
.tree { flex: 1; min-height: 0; margin-right: 1px; padding: 1px 0 0 8px; border: 1px solid #828790; background: #fff; }
.row { display: flex; align-items: center; height: 23px; }
.level-2 { padding-left: 19px; }
.level-3 { padding-left: 49px; }
.twisty { width: 9px; height: 9px; border: 1px solid #9a9a9a; background: linear-gradient(#3c62a8, #3c62a8) 1px 3px / 5px 1px no-repeat, #f6f6f6; }
.layers { width: 16px; height: 14px; margin: 0 3px 0 6px; }
.selected { padding: 1px 2px; font-weight: 700; background: #0078d7; color: #fff; }
.row input { appearance: none; width: 11px; height: 11px; margin: 0 8px; border: 1px solid #000; background: #fff; }
.row input:checked { background: linear-gradient(45deg, transparent 38%, #000 38%, #000 54%, transparent 54%) 1px 1px / 3px 7px no-repeat, linear-gradient(135deg, transparent 40%, #000 40%, #000 62%, transparent 62%) 3px 1px / 6px 6px no-repeat, #fff; }
.swatch { width: 15px; height: 11px; border: 1px solid #6e6e6e; }
.swatch-green { background: #d1f5d1; }
.swatch-peach { background: #f2dcc9; }

.map-frame { display: grid; grid-template-columns: minmax(0, 1fr) 20px; grid-template-rows: minmax(0, 1fr) 21px; flex: 1; min-width: 0; margin: 0 0 3px 5px; border-top: 2px solid #757575; border-left: 2px solid #757575; background: #f0f0f0; }
.map-view { min-height: 0; background: #fff; border-bottom: 1px solid #dedede; border-right: 1px solid #dedede; }
.map { width: 100%; height: 100%; }
.province { fill: #d1f5d1; fill-rule: evenodd; shape-rendering: crispEdges; }
.vscroll { grid-row: span 2; display: flex; flex-direction: column; padding-bottom: 21px; border-right: 1px solid #dedede; }
.vscroll button { height: 20px; display: grid; place-items: center; }
.vscroll svg, .view-btn svg { width: 10px; height: 10px; }
.track { display: flex; flex: 1; }
.vscroll .track { flex-direction: column; align-items: center; }
.thumb { background: #cdcdcd; }
.vscroll .thumb { width: 18px; flex: 87; }
.vscroll .fill-a { flex: 362; }
.vscroll .fill-b { flex: 389; }
.hscroll .thumb { flex: 216; height: 18px; }
.hscroll .fill-a { flex: 797; }
.hscroll .fill-b { flex: 459; }
.hscroll { display: flex; align-items: center; }
.view-btn { width: 21px; height: 18px; flex: none; display: grid; place-items: center; }
.view-btn.is-active { background: #bfdcf3; border: 1px solid #99cbf2; }
.view-sep { width: 1px; height: 17px; margin: 0 4px 0 2px; background: #808080; }

.statusbar { display: flex; justify-content: flex-end; height: 23px; flex: none; gap: 2px; background: #f0f0f0; }
.cell { border: 1px solid #f8f8f8; border-bottom: 0; }
.cell-a { width: 127px; }
.cell-b { width: 18px; }
.cell-coords { width: 355px; padding-left: 3px; }
```
